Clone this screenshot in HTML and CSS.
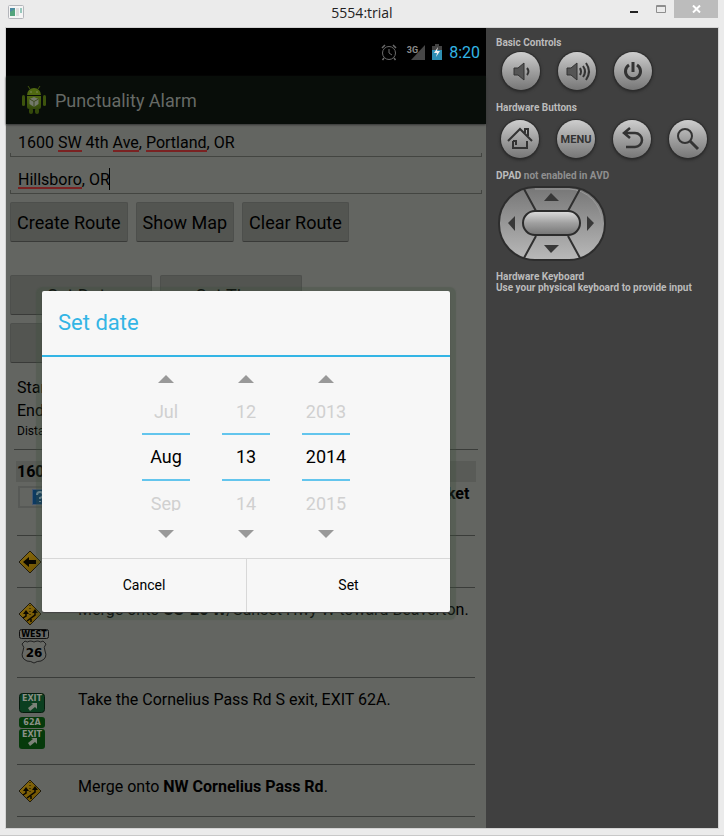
FILE: index.html
```html
<!DOCTYPE html>
<html lang="en">
<head>
<meta charset="utf-8">
<title>5554:trial</title>
<link rel="stylesheet" href="styles.css">
</head>
<body>
<svg class="defs" aria-hidden="true">
  <defs>
    <linearGradient id="sign" x1="0" y1="0" x2="1" y2="1"><stop offset="0" stop-color="#8a6d10"/><stop offset="1" stop-color="#6d5000"/></linearGradient>
    <linearGradient id="pad" x1="0" y1="0" x2="0" y2="1"><stop offset="0" stop-color="#767676"/><stop offset="1" stop-color="#b9b9b9"/></linearGradient>
    <linearGradient id="knob" x1="0" y1="0" x2="0" y2="1"><stop offset="0" stop-color="#dedede"/><stop offset="0.5" stop-color="#a0a0a0"/><stop offset="1" stop-color="#747474"/></linearGradient>
    <linearGradient id="droid" x1="0" y1="0" x2="0" y2="1"><stop offset="0" stop-color="#4d6510"/><stop offset="1" stop-color="#33490b"/></linearGradient>
    <symbol id="merge" viewBox="0 0 24 24">
      <path d="M12 1 23 12 12 23 1 12Z" fill="url(#sign)" stroke="#201b0c"/>
      <path d="M8 11V14L5 16M17 9V13L9 19M13 17V20" fill="none" stroke="#090700" stroke-width="1.500"/>
      <path d="M5 12 8 8 11 12ZM14 11 17 7 20 11Z" fill="#090700"/>
      <path d="M12 3V15" stroke="#090700" stroke-dasharray="1 2"/>
    </symbol>
  </defs>
</svg>
<div class="window">
  <header class="titlebar">
    <svg class="app-icon" viewBox="0 0 16 14"><rect x="0.5" y="0.5" width="15" height="13" rx="1" fill="#f5f5f5" stroke="#b4b6bb"/><path d="M2 3H7V11H2Z" fill="#4c8aa0"/><path d="M2 7 7 4V11H2Z" fill="#54a47c"/><path d="M8 3H11V11H8Z" fill="#dedede"/><path d="M12 3H14V8H12Z" fill="#98c8bd"/></svg>
    <h1>5554:trial</h1>
    <div class="caption">
      <button aria-label="Minimize"><svg width="8" height="12"><rect y="8" width="8" height="2" fill="#222"/></svg></button>
      <button aria-label="Maximize"><svg width="10" height="8"><path d="M0.500 0.500H9.500V7.500H0.500ZM0 1.500H10" fill="none" stroke="#8e8e8e"/></svg></button>
      <button class="close" aria-label="Close"><svg width="9" height="8"><path d="M1 0.500 8 7.500M8 0.500 1 7.500" stroke="#fff" stroke-width="2"/></svg></button>
    </div>
  </header>
  <div class="client">
    <main class="phone">
      <div class="status">
        <svg width="16" height="17" viewBox="0 0 16 17" fill="none" stroke="#6c6c6c"><circle cx="8" cy="9" r="6.500"/><path d="M1 4 4 1M15 4 12 1M3 14 1.500 16M13 14 14.500 16" stroke-width="1.500"/><path d="M8 5V9L11 11"/></svg>
        <div class="signal"><span>3G</span><svg width="14" height="15"><path d="M14 0V15H0Z" fill="#474747"/></svg></div>
        <svg width="10" height="16" viewBox="0 0 10 16"><path d="M3 0H7V2H10V16H0V2H3Z" fill="#434343"/><path d="M0 6H10V16H0Z" fill="#2e8fb4"/><path d="M6 3 2 9H5L4 13 8 7H5Z" fill="#f0f0f0"/></svg>
        <time>8:20</time>
      </div>
      <div class="screen">
        <div class="actionbar">
          <svg width="24" height="28" viewBox="0 0 24 28"><path d="M8 3 6 0M16 3 18 0" stroke="#40560d"/><path d="M5 9A7 7 0 0 1 19 9Z" fill="#4f6811"/><path d="M5 10H19V21Q19 23 17 23H7Q5 23 5 21Z" fill="url(#droid)"/><rect x="0" y="9" width="3" height="11" rx="1.500" fill="#3d540d"/><rect x="21" y="9" width="3" height="11" rx="1.500" fill="#3d540d"/><rect x="7" y="22" width="4" height="6" rx="2" fill="#34490b"/><rect x="13" y="22" width="4" height="6" rx="2" fill="#34490b"/><circle cx="9" cy="6" r="0.700" fill="#8a9272"/><circle cx="15" cy="6" r="0.700" fill="#8a9272"/><path d="M12 11 16.500 13V18L12 21 7.500 18V13Z" fill="#73796a"/><path d="M7.500 13 12 15.500 16.500 13M12 15.500V21" fill="none" stroke="#3d4a20"/></svg>
          <h2>Punctuality Alarm</h2>
        </div>
        <form class="planner">
          <div class="field"><input class="from" type="text" aria-label="From" value="1600 SW 4th Ave, Portland, OR"></div>
          <div class="field"><input class="to" type="text" aria-label="To" value="Hillsboro, OR"></div>
          <div class="actions">
            <button type="button">Create Route</button>
            <button type="button">Show Map</button>
            <button type="button">Clear Route</button>
          </div>
          <div class="actions schedule">
            <button type="button">Set Date</button>
            <button type="button">Set Time</button>
            <button type="button">Set Alarm</button>
          </div>
        </form>
        <section class="route">
          <div class="summary">
            <p>Starting</p>
            <p>Ending</p>
            <p class="small">Distance</p>
          </div>
          <h3>1600 SW 4th Ave</h3>
          <ol>
            <li class="first">
              <div class="signs"><span class="placeholder"><svg width="16" height="16"><rect x="0.500" y="0.500" width="15" height="15" fill="#0c3a62" stroke="#44566f"/><path d="M5 6Q5 3 8 3T11 6Q11 8 8 9V10M8 12V13" fill="none" stroke="#7894a8" stroke-width="2"/></svg></span></div>
              <p>Start out going north on <b>SW 4th Ave</b> toward <b>SW Market St</b>.</p>
            </li>
            <li>
              <div class="signs"><svg width="24" height="24" viewBox="0 0 24 24"><path d="M12 1 23 12 12 23 1 12Z" fill="url(#sign)" stroke="#201b0c"/><path d="M5 12 11 7V10H18V14H11V17Z" fill="#090700"/></svg></div>
              <p>Turn <b>left</b> onto <b>SW Market St</b>.</p>
            </li>
            <li class="tall">
              <div class="signs"><svg width="24" height="24"><use href="#merge"/></svg>
                <svg class="west" width="30" height="35" viewBox="0 0 30 35"><rect x="0.500" y="0.500" width="29" height="9" rx="2" fill="#666864" stroke="#111"/><text x="15" y="8" class="sign-west">WEST</text><path d="M6 12Q8 14 11 12Q13 12 15 13Q17 12 19 12Q22 14 24 12L27 15Q24 18 26 22Q29 29 22 32Q18 32 15 34Q12 32 8 32Q1 29 4 22Q6 18 3 15Z" fill="#686a66" stroke="#222"/><text x="15" y="28" class="sign-route">26</text></svg></div>
              <p>Merge onto <b>US-26 W</b>/Sunset Hwy W toward Beaverton.</p>
            </li>
            <li class="tall exits">
              <div class="signs"><svg width="26" height="57" viewBox="0 0 26 57"><rect x="0.500" y="0.500" width="25" height="19" rx="3" fill="#0b3f20" stroke="#051b0c"/><text x="13" y="8" class="sign-exit">EXIT</text><path id="arrow" d="M9 15 14 11 12 10H18V16L16 14 11 18Z" fill="#7c8279"/><rect y="24" width="26" height="11" rx="3" fill="#063a0b"/><text x="13" y="32" class="sign-exit">62A</text><rect y="36" width="26" height="20" rx="3" fill="#063a0b"/><text x="13" y="44" class="sign-exit">EXIT</text><use href="#arrow" y="35"/></svg></div>
              <p>Take the Cornelius Pass Rd S exit, EXIT 62A.</p>
            </li>
            <li>
              <div class="signs"><svg width="24" height="24"><use href="#merge"/></svg></div>
              <p>Merge onto <b>NW Cornelius Pass Rd</b>.</p>
            </li>
          </ol>
        </section>
        <div class="overlay">
          <div class="dialog" role="dialog" aria-labelledby="dialog-title">
            <h2 id="dialog-title">Set date</h2>
            <div class="pickers">
              <div class="picker">
                <button aria-label="Previous month"><svg width="16" height="8"><path d="M0 8 8 0 16 8Z"/></svg></button>
                <span class="before">Jul</span>
                <input type="text" aria-label="Month" value="Aug">
                <span class="after">Sep</span>
                <button class="down" aria-label="Next month"><svg width="16" height="8"><path d="M0 0 8 8 16 0Z"/></svg></button>
              </div>
              <div class="picker">
                <button aria-label="Previous day"><svg width="16" height="8"><path d="M0 8 8 0 16 8Z"/></svg></button>
                <span class="before">12</span>
                <input type="text" aria-label="Day" value="13">
                <span class="after">14</span>
                <button class="down" aria-label="Next day"><svg width="16" height="8"><path d="M0 0 8 8 16 0Z"/></svg></button>
              </div>
              <div class="picker">
                <button aria-label="Previous year"><svg width="16" height="8"><path d="M0 8 8 0 16 8Z"/></svg></button>
                <span class="before">2013</span>
                <input type="text" aria-label="Year" value="2014">
                <span class="after">2015</span>
                <button class="down" aria-label="Next year"><svg width="16" height="8"><path d="M0 0 8 8 16 0Z"/></svg></button>
              </div>
            </div>
            <div class="choices"><button>Cancel</button><button>Set</button></div>
          </div>
        </div>
      </div>
    </main>
    <aside class="controls">
      <h2>Basic Controls</h2>
      <div class="keys">
        <button aria-label="Volume down"><svg viewBox="0 0 38 38"><path d="M12 16H16L22 11V28L16 23H12Z" fill="#555" stroke="#333"/><path d="M25 16Q28 19.500 25 23" fill="none" stroke="#333" stroke-width="2"/></svg></button>
        <button aria-label="Volume up"><svg viewBox="0 0 38 38"><path d="M9 16H13L19 11V28L13 23H9Z" fill="#555" stroke="#333"/><path d="M22 16Q24 19.500 22 23M25 14Q29 19.500 25 25M28 11Q34 19.500 28 28" fill="none" stroke="#333" stroke-width="2"/></svg></button>
        <button aria-label="Power"><svg viewBox="0 0 38 38"><path d="M15 13A7.500 7.500 0 1 0 23 13M19 10V20" fill="none" stroke="#333" stroke-width="3"/></svg></button>
      </div>
      <h2>Hardware Buttons</h2>
      <div class="keys hardware">
        <button aria-label="Home"><svg viewBox="0 0 38 38" fill="none" stroke="#333" stroke-width="2"><path d="M7 21 19 9 31 21M24 13V9H27V16M12 21V28H26V21M12 21H15V25"/></svg></button>
        <button>MENU</button>
        <button aria-label="Back"><svg viewBox="0 0 38 38"><path d="M17 8 11 13 17 18M11 13H22A7 7 0 0 1 22 27H13" fill="none" stroke="#333" stroke-width="2.500"/></svg></button>
        <button aria-label="Search"><svg viewBox="0 0 38 38" fill="none" stroke="#333"><circle cx="16" cy="16" r="7" stroke-width="2"/><path d="M21 21 29 29" stroke-width="3"/></svg></button>
      </div>
      <h2>DPAD <span>not enabled in AVD</span></h2>
      <svg class="dpad" width="108" height="77" viewBox="0 0 108 77">
        <rect x="1" y="2" width="106" height="73" rx="36" fill="url(#pad)" stroke="#2d2d2d" stroke-width="2"/>
        <path d="M37 4H71A34 34 0 0 1 104 38" fill="none" stroke="#9a9a9a"/>
        <path d="M26 4 38 26M82 4 70 26M38 51 26 73M70 51 82 73" stroke="#303030" stroke-width="2"/>
        <rect x="25" y="26" width="57" height="24" rx="12" fill="url(#knob)" stroke="#2c2c2c" stroke-width="2"/>
        <path d="M46 16 53 8 61 16ZM46 60H61L53 68ZM17 31V46L10 38ZM89 31V46L96 38Z" fill="#383838"/>
      </svg>
      <h2>Hardware Keyboard<br>Use your physical keyboard to provide input</h2>
    </aside>
  </div>
</div>
</body>
</html>
```
FILE: styles.css
```css
* { box-sizing: border-box; }
body, h1, h2, h3, p, ol { margin: 0; padding: 0; }
body { background: #ebebeb; font-family: Roboto, "Liberation Sans", sans-serif; font-size: 16px; color: #000; }
button, input { font: inherit; color: inherit; margin: 0; padding: 0; border: 0; background: none; border-radius: 0; }
svg { display: block; flex: none; }
.defs { position: absolute; width: 0; height: 0; }

.window { min-height: 100vh; display: flex; flex-direction: column; padding: 0 6px 7px; border-bottom: 1px solid #c8c8c8; }
.titlebar { height: 28px; flex: none; display: grid; grid-template-columns: 1fr auto 1fr; align-items: start; }
.app-icon { width: 16px; height: 14px; margin: 5px 0 0 2px; }
.titlebar h1 { font: 14px/26px "Open Sans", sans-serif; color: #222; }
.caption { display: flex; justify-content: flex-end; }
.caption button { height: 18px; width: 27px; display: flex; align-items: center; justify-content: center; }
.caption .close { width: 44px; background: #bcbcbc; }

.client { flex: 1; display: grid; grid-template-columns: 480fr 232fr; box-shadow: 0 0 0 1px #d3d3d3; }
.phone { display: flex; flex-direction: column; min-width: 0; background: #636561; }
.status { height: 48px; background: #000; display: flex; align-items: center; justify-content: flex-end; gap: 7px; padding: 0 6px; color: #33b5e5; }
.signal { display: flex; align-items: flex-end; margin-left: 3px; }
.signal span { font: bold 9px/10px Roboto, sans-serif; color: #8b8b8b; align-self: flex-start; margin-right: -7px; }
.screen { flex: 1; position: relative; }
.actionbar { height: 48px; background: #080d09; display: flex; align-items: center; gap: 9px; padding: 0 16px; box-shadow: 0 1px 2px #333; }
.actionbar h2 { font-size: 18px; font-weight: 400; color: #666a66; }

.planner { padding: 1px 4px 0; }
.field { height: 32px; margin-bottom: 5px; background: linear-gradient(#434541, #434541) 0 100% / 100% 1px no-repeat, linear-gradient(#434541, #434541) 0 100% / 1px 4px no-repeat, linear-gradient(#434541, #434541) 100% 100% / 1px 4px no-repeat; }
.field input { display: block; width: 100%; height: 100%; padding: 2px 8px 0; outline: 0; background-repeat: no-repeat; }
.from { background-image: linear-gradient(#7a2222, #7a2222), linear-gradient(#7a2222, #7a2222), linear-gradient(#7a2222, #7a2222); background-size: 24px 2px, 26px 2px, 61px 2px; background-position: 48px 25px, 103px 25px, 136px 25px; }
.to { background-image: linear-gradient(#7a2222, #7a2222), linear-gradient(#000, #000); background-size: 64px 2px, 1px 22px; background-position: 8px 25px, 99px 6px; }
.actions { display: flex; flex-wrap: wrap; gap: 8px; margin-top: 8px; }
.actions button { height: 40px; padding: 0 6px; font-size: 18px; background: #535551; border: 1px solid #4d4f4c; border-bottom: 1px solid #393a38; border-radius: 2px; }
.schedule { margin-top: 33px; }
.schedule button { width: 142px; }
.schedule button:last-child { margin-right: 50%; }

.route { padding: 13px 8px 0; }
.summary { padding: 0 3px 8px; line-height: 23px; border-bottom: 1px solid #3a3c39; }
.summary .small { font-size: 12px; line-height: 19px; }
.route h3 { margin: 11px 2px 0; padding: 0 1px; font-size: 16px; line-height: 21px; background: #595b57; }
.route ol { list-style: none; margin: 0 3px; }
.route li { min-height: 52px; display: grid; grid-template-columns: 61px 1fr; border-bottom: 1px solid #3a3c39; padding-bottom: 12px; }
.route li p { line-height: 22px; padding-top: 11px; }
.route .first { min-height: 54px; padding-bottom: 0; }
.route .first p { padding-top: 1px; }
.route .tall { padding-bottom: 13px; }
.route .exits { padding-bottom: 14px; }
.signs { padding: 14px 0 0 1px; }
.first .signs { padding-top: 4px; }
.west { margin: 3px 0 0 1px; }
.exits .signs { padding: 15px 0 0 2px; }
.placeholder { display: flex; width: 44px; height: 22px; align-items: center; justify-content: center; border: 2px solid #575956; }
.sign-west, .sign-exit, .sign-route { font-family: "DejaVu Sans", sans-serif; font-weight: bold; text-anchor: middle; font-size: 8px; }
.sign-route { font-size: 12px; }
.sign-exit { fill: #8a9087; }

.overlay { position: absolute; inset: 0; padding-bottom: 2px; display: flex; align-items: center; justify-content: center; }
.dialog { width: 85%; background: #f7f7f7; border-radius: 2px; box-shadow: 0 1px 1px #444, 0 2px 1px 6px rgba(58, 80, 60, 0.3); }
.dialog h2 { font-size: 22px; font-weight: 400; line-height: 64px; padding: 0 16px; color: #33b5e5; border-bottom: 2px solid #33b5e5; }
.pickers { display: flex; justify-content: center; gap: 32px; font-size: 18px; line-height: 22px; }
.picker { width: 48px; display: flex; flex-direction: column; text-align: center; }
.picker button { height: 44px; display: flex; align-items: center; justify-content: center; fill: #999; }
.picker .down { height: 47px; }
.picker input { width: 100%; height: 48px; text-align: center; border: solid #63c5ed; border-width: 2px 0; }
.before, .after { color: #d0d0d0; }
.before { margin-bottom: 10px; }
.after { margin-top: 12px; height: 18px; overflow: hidden; }
.choices { display: grid; grid-template-columns: 1fr 1fr; border-top: 1px solid #d8d8d8; }
.choices button { height: 53px; font-size: 14px; }
.choices button + button { border-left: 1px solid #d8d8d8; }

.controls { background: #404040; padding: 9px 9px 0 10px; color: #bbb; min-width: 0; }
.controls h2 { font-size: 10px; line-height: 11px; font-weight: 700; }
.controls h2 span { color: #8f8f8f; }
.keys { display: flex; gap: 18px; margin: 4px 0 12px 6px; }
.hardware { margin: 7px 0 12px 5px; }
.keys button { width: 38px; height: 38px; flex: none; border-radius: 50%; background: linear-gradient(#cecece, #a0a0a0 50%, #777); box-shadow: 0 0 0 1px #2d2d2d, 0 1px 3px 1px #292929; color: #333; font-size: 11px; font-weight: 700; }
.dpad { margin: 4px 0 9px 2px; }
```
